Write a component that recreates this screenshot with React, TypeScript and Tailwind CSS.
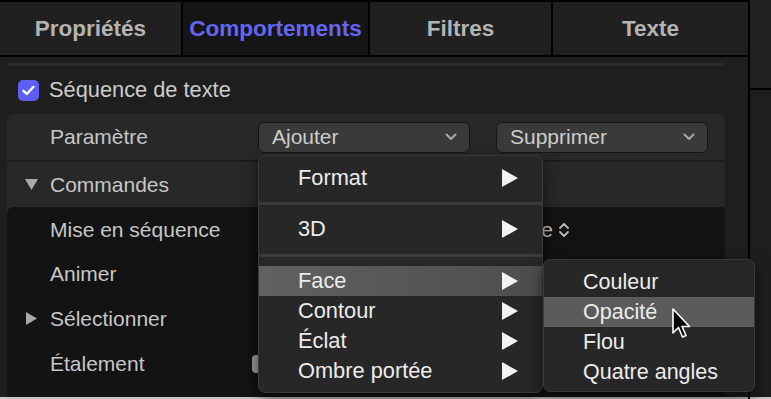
import React from 'react';

const Chevron = () => (
  <svg width="12" height="8" viewBox="0 0 12 8" className="shrink-0">
    <path d="M1.5 1.5 L6 6 L10.5 1.5" fill="none" stroke="#a8a8a8" strokeWidth="2" strokeLinecap="round" strokeLinejoin="round" />
  </svg>
);

const MenuArrow = () => (
  <svg width="18" height="20" viewBox="0 0 18 20">
    <path d="M1 1 L17 10 L1 19 Z" fill="#f2f2f2" />
  </svg>
);

function Dropdown({ label, className }: { label: string; className: string }) {
  return (
    <div
      className={`flex h-[31px] items-center justify-between rounded-[6px] border border-[#151515] bg-[#3a3a3a] pl-[13px] pr-[12px] text-[#cdcdcd] ${className}`}
    >
      <span>{label}</span>
      <Chevron />
    </div>
  );
}

function Row({ children, h = 'h-[45px]' }: { children: React.ReactNode; h?: string }) {
  return <div className={`flex ${h} items-center`}>{children}</div>;
}

function MenuItem({ label, active, arrow }: { label: string; active?: boolean; arrow?: boolean }) {
  return (
    <div
      className={`flex h-[30px] items-center justify-between pl-[39px] pr-[23px] ${
        active ? 'bg-gradient-to-r from-[#616161] to-[#4d4d4d]' : ''
      }`}
    >
      <span>{label}</span>
      {arrow && <MenuArrow />}
    </div>
  );
}

export default function App() {
  const tabs = ['Propriétés', 'Comportements', 'Filtres', 'Texte'];
  const widths = ['w-[183px]', 'w-[187px]', 'w-[183px]', 'w-[195px]'];

  return (
    <div className="relative flex h-[399px] w-[771px] overflow-hidden bg-[#1e1e1e] font-['Liberation_Sans',Arial,sans-serif] text-[21px] text-[#c6c6c6]">
      {/* left column */}
      <div className="flex w-[748px] flex-col">
        <div className="flex h-[57px] border-y-2 border-black bg-[#202020]">
          {tabs.map((t, i) => (
            <div
              key={t}
              className={`flex items-center justify-center pt-[1px] text-[22.5px] font-bold ${widths[i]} ${
                i < 3 ? 'border-r-2 border-black' : ''
              } ${i === 1 ? 'bg-[#151515] text-[#6565f2]' : 'text-[#b4b4b4]'}`}
            >
              {t}
            </div>
          ))}
        </div>

        <div className="flex flex-1 flex-col pl-[7px] pr-[23px]">
          <div className="mt-[6px] h-[3px] bg-[#2b2b2b]" />
          <div className="flex h-[48px] items-center gap-[10px] pl-[11px]">
            <div className="flex h-[21px] w-[21px] items-center justify-center rounded-[5px] bg-[#5e5ef3]">
              <svg width="13" height="11" viewBox="0 0 13 11">
                <path d="M1.5 5.8 L4.8 9 L11.5 1.8" fill="none" stroke="#fff" strokeWidth="2.4" strokeLinecap="round" strokeLinejoin="round" />
              </svg>
            </div>
            <span className="text-[21.8px] text-[#cbcbcb]">Séquence de texte</span>
          </div>

          <div className="flex flex-1 flex-col rounded-t-[6px] bg-[#282828]">
            <Row h="h-[46px]">
              <span className="w-[251px] pl-[43px]">Paramètre</span>
              <Dropdown label="Ajouter" className="w-[212px]" />
              <Dropdown label="Supprimer" className="ml-[26px] w-[212px]" />
            </Row>
            <div className="h-[2px] bg-[#1b1b1b]" />
            <Row>
              <span className="flex w-[43px] justify-center pl-[5px]">
                <svg width="13" height="11" viewBox="0 0 13 11">
                  <path d="M0 0 L13 0 L6.5 11 Z" fill="#a9a9a9" />
                </svg>
              </span>
              <span>Commandes</span>
            </Row>
            <div className="flex flex-1 flex-col rounded-tl-[6px] bg-[#131313]">
              <Row>
                <span className="w-[250px] pl-[43px]">Mise en séquence</span>
                <span className="w-[296px] text-right">Caractère</span>
                <svg width="14" height="18" viewBox="0 0 14 18" className="ml-[4px]">
                  <path d="M3 7 L7 3 L11 7 M3 11 L7 15 L11 11" fill="none" stroke="#b8b8b8" strokeWidth="1.8" strokeLinecap="round" strokeLinejoin="round" />
                </svg>
              </Row>
              <Row h="h-[44px]">
                <span className="pl-[43px]">Animer</span>
              </Row>
              <Row>
                <span className="flex w-[43px] justify-center pl-[5px]">
                  <svg width="11" height="13" viewBox="0 0 11 13">
                    <path d="M0 0 L11 6.5 L0 13 Z" fill="#a9a9a9" />
                  </svg>
                </span>
                <span>Sélectionner</span>
              </Row>
              <Row>
                <span className="w-[245px] pl-[43px]">Étalement</span>
                <div className="h-[18px] w-[12px] rounded-[4px] bg-[#9b9b9b]" />
              </Row>
            </div>
          </div>
        </div>
        <div className="h-[2px] bg-[#c9c9c9]" />
      </div>

      {/* right strip */}
      <div className="flex w-[23px] flex-col border-l-2 border-black">
        <div className="h-[90px] border-b-2 border-black bg-[#212121]" />
        <div className="flex-1 bg-[#1e1e1e]" />
        <div className="h-[2px] bg-[#c9c9c9]" />
      </div>

      {/* main popup menu */}
      <div className="absolute left-[258px] top-[155px] flex h-[238px] w-[285px] flex-col rounded-[7px] border border-[#3a3a3a] bg-[#272727] pt-[7px] text-[21.8px] text-[#ececec] shadow-[0_6px_16px_rgba(0,0,0,0.6)]">
        <MenuItem label="Format" arrow />
        <div className="flex h-[21px] items-center">
          <div className="h-[3px] w-full bg-[#3c3c3c]" />
        </div>
        <MenuItem label="3D" arrow />
        <div className="flex h-[22px] items-center">
          <div className="h-[3px] w-full bg-[#3c3c3c]" />
        </div>
        <MenuItem label="Face" arrow active />
        <MenuItem label="Contour" arrow />
        <MenuItem label="Éclat" arrow />
        <MenuItem label="Ombre portée" arrow />
      </div>

      {/* submenu */}
      <div className="absolute left-[543px] top-[259px] flex h-[133px] w-[212px] flex-col rounded-[7px] border border-[#3a3a3a] bg-[#272727] pt-[7px] text-[21.5px] text-[#ececec] shadow-[0_6px_16px_rgba(0,0,0,0.6)]">
        <MenuItem label="Couleur" />
        <div className="flex h-[30px] items-center bg-[#5b5b5b] pl-[39px]">Opacité</div>
        <MenuItem label="Flou" />
        <MenuItem label="Quatre angles" />
      </div>

      {/* cursor */}
      <svg width="24" height="34" viewBox="0 0 24 34" className="absolute left-[671px] top-[307px]">
        <path
          d="M2 2 L2 26 L7.5 20.5 L11.5 30 L15 28.5 L11 19.5 L18.5 19.5 Z"
          fill="#000"
          stroke="#fff"
          strokeWidth="1.6"
          strokeLinejoin="round"
        />
      </svg>
    </div>
  );
}
